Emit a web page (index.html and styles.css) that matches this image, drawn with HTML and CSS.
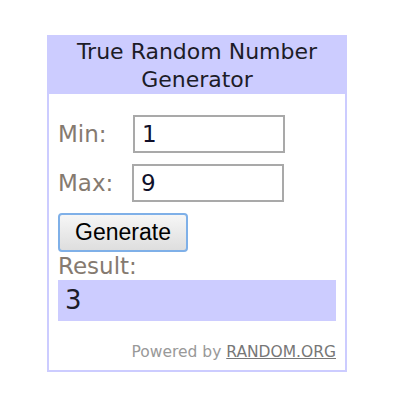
FILE: index.html
```html
<!DOCTYPE html>
<html>
<head>
<meta charset="utf-8">
<link rel="stylesheet" href="styles.css">
</head>
<body>
<div class="widget">
  <div class="header">True Random Number<br>Generator</div>
  <div class="body">
    <div class="row row-min">
      <span class="label">Min:</span>
      <div class="input">1</div>
    </div>
    <div class="row row-max">
      <span class="label">Max:</span>
      <div class="input">9</div>
    </div>
    <button class="btn">Generate</button>
    <div class="result-label">Result:</div>
    <div class="result">3</div>
    <div class="powered">Powered by <span class="link">RANDOM.ORG</span></div>
  </div>
</div>
</body>
</html>
```
FILE: styles.css
```css
html, body {
  margin: 0;
  background: #fff;
}
body {
  padding: 35px 0 0 47px;
  font-family: "DejaVu Sans", Verdana, sans-serif;
}
.widget {
  box-sizing: border-box;
  width: 300px;
  height: 337px;
  border: 2px solid #ccccff;
}
.header {
  box-sizing: border-box;
  height: 57px;
  padding-top: 1px;
  background: #ccccff;
  color: #1c1c28;
  font-size: 22px;
  line-height: 28px;
  text-align: center;
}
.body {
  padding: 0 9px;
}
.row {
  display: flex;
  align-items: center;
}
.row-min {
  margin-top: 21px;
}
.row-max {
  margin-top: 11px;
}
.label {
  width: 75px;
  font-size: 23px;
  color: #857a70;
}
.row-max .label {
  width: 74px;
}
.input {
  box-sizing: border-box;
  width: 152px;
  height: 38px;
  border: 2px solid #a9a9a9;
  padding-left: 7px;
  font-size: 23px;
  line-height: 34px;
  color: #10102a;
}
.btn {
  display: block;
  box-sizing: border-box;
  margin-top: 11px;
  width: 130px;
  height: 39px;
  padding: 0;
  border: 2px solid #7fb0e8;
  border-radius: 4px;
  background: linear-gradient(#f6f6f6, #dedede);
  font-family: "Liberation Sans", Arial, sans-serif;
  font-size: 23px;
  color: #000;
}
.result-label {
  height: 28px;
  font-size: 23px;
  line-height: 28px;
  color: #857a70;
}
.result {
  box-sizing: border-box;
  height: 41px;
  padding-left: 7px;
  background: #ccccff;
  color: #1c1c28;
  font-size: 26px;
  line-height: 41px;
}
.powered {
  margin-top: 22px;
  text-align: right;
  font-size: 15.5px;
  line-height: 18px;
  color: #999;
}
.link {
  color: #777;
  text-decoration: underline;
}
```
